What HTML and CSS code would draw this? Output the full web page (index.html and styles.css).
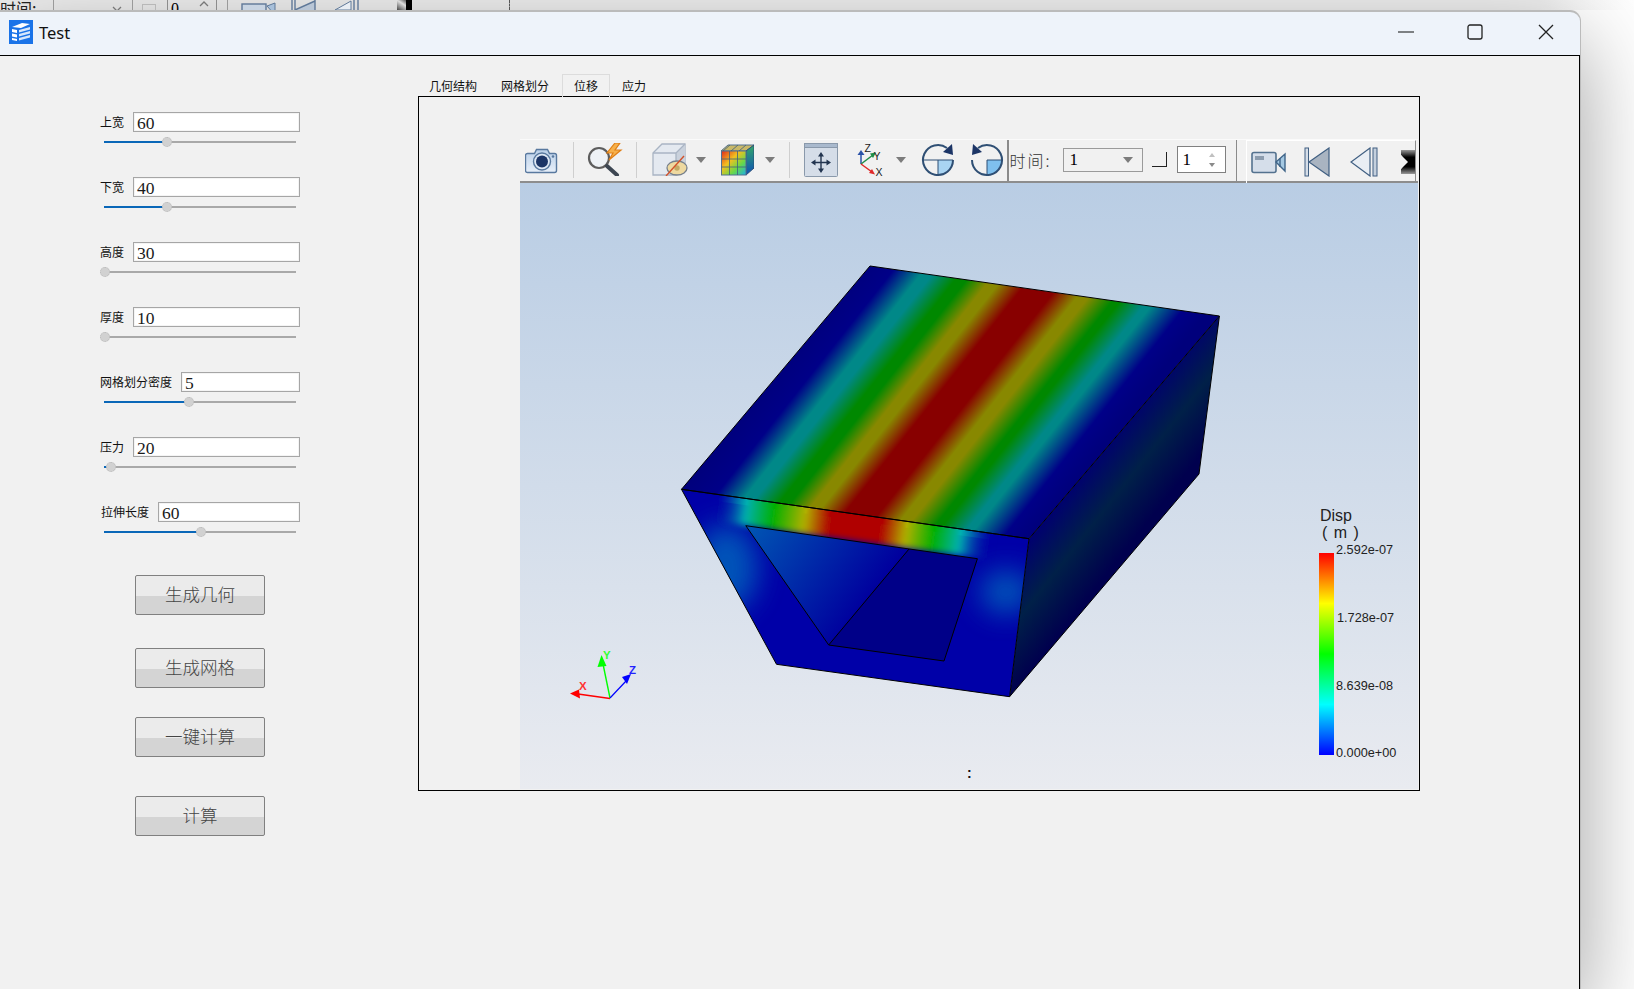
FILE: index.html
```html
<!DOCTYPE html>
<html lang="zh">
<head>
<meta charset="utf-8">
<title>Test</title>
<link rel="stylesheet" href="styles.css">
</head>
<body>
<div class="backdrop">
  <span class="bd-time">时间:</span>
  <span class="bd-combo"><svg class="bd-chev" width="10" height="6" viewBox="0 0 10 6"><path d="M1 1l4 4 4-4" fill="none" stroke="#777" stroke-width="1.3"/></svg></span>
  <span class="bd-check"></span>
  <span class="bd-spin">0<svg class="bd-up" width="10" height="6" viewBox="0 0 10 6"><path d="M1 5l4-4 4 4" fill="none" stroke="#777" stroke-width="1.3"/></svg></span>
  <span class="bd-sep"></span>
  <svg class="bd-ic1" width="36" height="10" viewBox="0 0 36 10"><rect x="1" y="4" width="24" height="12" fill="#c8d4e2" stroke="#5f7898" stroke-width="1.4"/><path d="M26 6l8-3v12z" fill="#a8c0da" stroke="#5f7898"/></svg>
  <svg class="bd-ic2" width="26" height="10" viewBox="0 0 26 10"><path d="M24 1v9H4z" fill="#b9c6d6"/><path d="M1 0v10M4 0v10M24 1L4 10M24 0v10" fill="none" stroke="#5f7898" stroke-width="1.4"/></svg>
  <svg class="bd-ic3" width="26" height="10" viewBox="0 0 26 10"><path d="M17 1L1 10h16z" fill="#e8edf3" stroke="#5f7898"/><path d="M20 0v10M24 0v10" stroke="#5f7898" stroke-width="1.4"/></svg>
  <svg class="bd-black" width="15" height="10" viewBox="0 0 15 10"><defs><linearGradient id="bdBlack" x1="0" y1="1" x2="1" y2="0"><stop offset="0" stop-color="#444"/><stop offset=".5" stop-color="#ddd"/><stop offset="1" stop-color="#000"/></linearGradient></defs><rect width="15" height="10" fill="url(#bdBlack)"/><path d="M9 0h6v10H9z" fill="#000"/></svg>
  <span class="bd-dash"></span>
</div>

<div class="window">
  <header class="titlebar">
    <svg class="app-icon" width="24" height="24" viewBox="0 0 24 24">
      <rect width="24" height="24" fill="#1a73e8"/>
      <path d="M3 7l10-4 8 1-9 4zM3 9l5 1v3l-5-1zM3 13.500l5 1v3l-5-1zM3 18l5 1v2l-5-1z" fill="#fff"/>
      <path d="M10 10l11-3v2.500l-11 3zM10 14l11-3v2.500l-11 3zM10 18l11-3v2.500l-11 3z" fill="#d7e7fb"/>
    </svg>
    <span class="app-title">Test</span>
    <svg class="win-min" width="16" height="2" viewBox="0 0 16 2"><path d="M0 1h16" stroke="#222" stroke-width="1.100"/></svg>
    <svg class="win-max" width="16" height="16" viewBox="0 0 16 16"><rect x="1" y="1" width="14" height="14" rx="2" fill="none" stroke="#222" stroke-width="1.300"/></svg>
    <svg class="win-close" width="16" height="16" viewBox="0 0 16 16"><path d="M1 1l14 14M15 1L1 15" stroke="#222" stroke-width="1.300"/></svg>
  </header>

  <div class="client">
    <aside class="form">
      <div class="field"><div class="field-top"><span class="field-label">上宽</span><div class="field-input">60</div></div><div class="slider"><div class="slider-fill" style="width:63px"><i class="slider-thumb"></i></div></div></div>
      <div class="field"><div class="field-top"><span class="field-label">下宽</span><div class="field-input">40</div></div><div class="slider"><div class="slider-fill" style="width:63px"><i class="slider-thumb"></i></div></div></div>
      <div class="field"><div class="field-top"><span class="field-label">高度</span><div class="field-input">30</div></div><div class="slider"><div class="slider-fill" style="width:1px"><i class="slider-thumb"></i></div></div></div>
      <div class="field"><div class="field-top"><span class="field-label">厚度</span><div class="field-input">10</div></div><div class="slider"><div class="slider-fill" style="width:1px"><i class="slider-thumb"></i></div></div></div>
      <div class="field"><div class="field-top"><span class="field-label">网格划分密度</span><div class="field-input">5</div></div><div class="slider"><div class="slider-fill" style="width:85px"><i class="slider-thumb"></i></div></div></div>
      <div class="field"><div class="field-top"><span class="field-label">压力</span><div class="field-input">20</div></div><div class="slider"><div class="slider-fill" style="width:7px"><i class="slider-thumb"></i></div></div></div>
      <div class="field"><div class="field-top field-top-shift"><span class="field-label">拉伸长度</span><div class="field-input">60</div></div><div class="slider"><div class="slider-fill" style="width:97px"><i class="slider-thumb"></i></div></div></div>
      <div class="action action-1">生成几何</div>
      <div class="action action-2">生成网格</div>
      <div class="action action-3">一键计算</div>
      <div class="action action-4">计算</div>
    </aside>

    <main class="workspace">
      <nav class="tabs">
        <span class="tab">几何结构</span>
        <span class="tab">网格划分</span>
        <span class="tab tab-active">位移</span>
        <span class="tab">应力</span>
      </nav>
      <section class="viewer">
        <div class="toolbar">
          <svg class="ic ic-camera" width="34" height="28" viewBox="0 0 34 28">
            <defs><linearGradient id="camBody" x1="0" y1="0" x2="0" y2="1"><stop offset="0" stop-color="#b9cfe8"/><stop offset="1" stop-color="#e7eff9"/></linearGradient></defs>
            <path d="M2.500 7.500h7l2-4h11l2 4h5a2 2 0 0 1 2 2v15a2 2 0 0 1-2 2h-27a2 2 0 0 1-2-2v-15a2 2 0 0 1 2-2z" fill="url(#camBody)" stroke="#59799f" stroke-width="1.400"/>
            <circle cx="17" cy="15.500" r="8.500" fill="#dfe9f5" stroke="#59799f" stroke-width="1.400"/>
            <circle cx="17" cy="15.500" r="6" fill="#1c3566"/>
            <circle cx="28" cy="10.500" r="1.300" fill="#59799f"/>
          </svg>
          <span class="sep sep-1"></span>
          <svg class="ic ic-search" width="36" height="33" viewBox="0 0 36 33">
            <circle cx="12" cy="15" r="10" fill="#eef2f6" stroke="#5d5d5d" stroke-width="2.200"/>
            <path d="M20 23l10 9" stroke="#3d4652" stroke-width="4" stroke-linecap="round"/>
            <path d="M28 0l-8 10h6l-4 7 12-10h-6l5-7z" fill="#f6b04a" stroke="#e07f16" stroke-width="1.200"/>
          </svg>
          <span class="sep sep-2"></span>
          <svg class="ic ic-cube" width="36" height="33" viewBox="0 0 36 33">
            <path d="M1 10L10 1h23v22l-9 9H1z" fill="#e4e9f0" stroke="#a9b4c3" stroke-width="1.300"/>
            <path d="M24 10l9-9v22l-9 9z" fill="#c9d1dc"/>
            <path d="M1 10h23v22M24 10l9-9" fill="none" stroke="#a9b4c3" stroke-width="1.300"/>
            <ellipse cx="25" cy="25" rx="10" ry="7" fill="#eed9a0" stroke="#77808c" stroke-width="1.300"/>
            <circle cx="25" cy="25" r="2.700" fill="#c3a965"/>
            <path d="M14 33L32 13" stroke="#d2522a" stroke-width="1.400"/>
          </svg>
          <svg class="chev chev-cube" width="10" height="6" viewBox="0 0 10 6"><path d="M0 0h10L5 6z" fill="#7c7c7c"/></svg>
          <svg class="ic ic-colors" width="33" height="32" viewBox="0 0 33 32">
            <defs>
              <linearGradient id="rainbow" x1="0" y1="0" x2="1" y2="1"><stop offset="0" stop-color="#e0281c"/><stop offset=".38" stop-color="#f2c020"/><stop offset=".68" stop-color="#68d848"/><stop offset="1" stop-color="#18b0e8"/></linearGradient>
              <linearGradient id="rainbowSide" x1="0" y1="0" x2="0" y2="1"><stop offset="0" stop-color="#34a868"/><stop offset="1" stop-color="#0c50b8"/></linearGradient>
            </defs>
            <path d="M0 7L7 1h26L25 7z" fill="#c8b868" stroke="#52708f"/>
            <path d="M25 7l8-6v23l-8 7z" fill="url(#rainbowSide)" stroke="#2c4f78"/>
            <rect x="0.500" y="7" width="24.500" height="24" fill="url(#rainbow)" stroke="#52708f"/>
            <path d="M8.500 7v24M16.500 7v24M.5 15h24.500M.5 23h24.500M9 1L2 7M17 1l-7 6M25 1l-7 6" stroke="#3f5f7f" stroke-width=".8" fill="none"/>
          </svg>
          <svg class="chev chev-colors" width="10" height="6" viewBox="0 0 10 6"><path d="M0 0h10L5 6z" fill="#7c7c7c"/></svg>
          <span class="sep sep-3"></span>
          <svg class="ic ic-fit" width="34" height="34" viewBox="0 0 34 34">
            <rect x="0.500" y="0.500" width="33" height="33" rx="1" fill="#d5dde8" stroke="#8a99ab"/>
            <rect x="0.500" y="0.500" width="33" height="4" fill="#a9b9cd" stroke="#8a99ab"/>
            <path d="M17 12v15M9 19.500h16" stroke="#22344f" stroke-width="1.400"/>
            <path d="M17 9l-3 4.500h6zM17 30l-3-4.500h6zM7 19.500l4.500-3v6zM27 19.500l-4.500-3v6z" fill="#22344f"/>
          </svg>
          <svg class="ic ic-axes" width="28" height="34" viewBox="0 0 28 34">
            <path d="M4 21V10" stroke="#2a52a8" stroke-width="1.500"/><path d="M4 7l-3.500 5h7z" fill="#2a52a8"/>
            <path d="M4 21l12-9" stroke="#1e8c48" stroke-width="1.500"/><path d="M19 9.500l-6 1 3 4.500z" fill="#1e8c48"/>
            <path d="M4 21l11 8" stroke="#e02828" stroke-width="1.500"/><path d="M18 31.500l-6-1.500 3-4z" fill="#e02828"/>
            <text class="axis-letter" x="7.500" y="9">Z</text>
            <text class="axis-letter" x="16.500" y="17">Y</text>
            <text class="axis-letter" x="18.500" y="33">X</text>
          </svg>
          <svg class="chev chev-axes" width="10" height="6" viewBox="0 0 10 6"><path d="M0 0h10L5 6z" fill="#7c7c7c"/></svg>
          <svg class="ic ic-rot1" width="34" height="34" viewBox="0 0 34 34">
            <path d="M17 17h15a15 15 0 0 1-15 15z" fill="#a9d4f2"/>
            <path d="M2 17h30M17 17v15" stroke="#2f4f74" stroke-width="1"/>
            <path d="M26 5A15 15 0 1 0 32 17" fill="none" stroke="#2f4f74" stroke-width="2"/>
            <path d="M31 1l1 11-10-3z" fill="#1c3566"/>
          </svg>
          <svg class="ic ic-rot2" width="34" height="34" viewBox="0 0 34 34">
            <path d="M17 17h15a15 15 0 0 1-15 15z" fill="#7fc0ee"/>
            <path d="M17 17h15M17 17v15" stroke="#2f4f74" stroke-width="1"/>
            <path d="M8 5A15 15 0 1 1 2 17" fill="none" stroke="#2f4f74" stroke-width="2"/>
            <path d="M3 1l-1 11 10-3z" fill="#1c3566"/>
          </svg>
          <span class="sep-dark sep-4"></span>
          <span class="time-label">时间:</span>
          <div class="combo"><span class="combo-value">1</span><svg width="10" height="6" viewBox="0 0 10 6"><path d="M0 0h10L5 6z" fill="#7c7c7c"/></svg></div>
          <span class="mini-btn"></span>
          <div class="spin"><span class="spin-value">1</span><svg width="8" height="16" viewBox="0 0 8 16"><path d="M4 1L7 5H1z" fill="#c0c0c0"/><path d="M4 15L7 11H1z" fill="#8a8a8a"/></svg></div>
          <span class="sep-dark sep-5"></span>
          <div class="toolbar-end">
            <svg class="ic ic-rec" width="36" height="24" viewBox="0 0 36 24">
              <rect x="1" y="2.500" width="24" height="20" rx="2" fill="#d5deea" stroke="#54728f" stroke-width="1.600"/>
              <rect x="4" y="6" width="9" height="4" fill="#8c9cae"/>
              <path d="M25 12l9-8v17z" fill="#a4c8e2" stroke="#3f6488" stroke-width="1.400"/>
              <path d="M29 8v9" stroke="#3f6488" stroke-width="1.400"/>
            </svg>
            <svg class="ic ic-first" width="26" height="30" viewBox="0 0 26 30">
              <rect x="1" y="1" width="3.500" height="28" fill="#d6dee8" stroke="#405f82"/>
              <path d="M25 1v28L5 15z" fill="#a9b4c1" stroke="#405f82" stroke-width="1.200"/>
            </svg>
            <svg class="ic ic-prev" width="29" height="30" viewBox="0 0 29 30">
              <path d="M20 1v28L1 15z" fill="#e9eef4" stroke="#405f82" stroke-width="1.200"/>
              <rect x="23" y="1" width="4" height="28" fill="#c5d0dd" stroke="#405f82"/>
            </svg>
            <svg class="ic ic-next" width="14" height="24" viewBox="0 0 14 24">
              <defs><linearGradient id="nextFade" x1="0" y1="0" x2="0" y2="1"><stop offset="0" stop-color="#999"/><stop offset=".3" stop-color="#000"/><stop offset=".7" stop-color="#000"/><stop offset="1" stop-color="#999"/></linearGradient></defs>
              <path d="M0 0h14v24H0l0-5 5-7-5-7z" fill="url(#nextFade)"/>
              <path d="M0 5l7 7-7 7z" fill="#f1f1f1"/>
            </svg>
          </div>
        </div>
        <svg class="scene" viewBox="520 183 898 606" width="898" height="606">
          <defs>
            <linearGradient id="sky" x1="0" y1="0" x2="0" y2="1"><stop offset="0" stop-color="#b9cde4"/><stop offset="1" stop-color="#e9ebf0"/></linearGradient>
            <linearGradient id="topFace" gradientUnits="userSpaceOnUse" x1="681.5" y1="489.3" x2="919.7" y2="677.4">
              <stop offset="0" stop-color="#00007c"/><stop offset=".1" stop-color="#000088"/><stop offset=".18" stop-color="#008888"/><stop offset=".21" stop-color="#008888"/><stop offset=".28" stop-color="#008800"/><stop offset=".31" stop-color="#008800"/><stop offset=".37" stop-color="#888800"/><stop offset=".4" stop-color="#888800"/><stop offset=".47" stop-color="#880000"/><stop offset=".56" stop-color="#880000"/><stop offset=".63" stop-color="#888800"/><stop offset=".66" stop-color="#888800"/><stop offset=".73" stop-color="#008800"/><stop offset=".75" stop-color="#008800"/><stop offset=".82" stop-color="#008888"/><stop offset=".84" stop-color="#008888"/><stop offset=".93" stop-color="#000088"/><stop offset="1" stop-color="#00007c"/>
            </linearGradient>
            <linearGradient id="rightFace" gradientUnits="userSpaceOnUse" x1="1029" y1="538.7" x2="1094" y2="590">
              <stop offset="0" stop-color="#000070"/><stop offset=".5" stop-color="#002048"/><stop offset="1" stop-color="#00004e"/>
            </linearGradient>
            <linearGradient id="frontBand" gradientUnits="userSpaceOnUse" x1="681.5" y1="489.3" x2="1029" y2="538.7">
              <stop offset=".1" stop-color="#0000a8" stop-opacity="0"/><stop offset=".19" stop-color="#00b0b0"/><stop offset=".27" stop-color="#00b000"/><stop offset=".36" stop-color="#b0b000"/><stop offset=".43" stop-color="#b00000"/><stop offset=".58" stop-color="#b00000"/><stop offset=".65" stop-color="#b0b000"/><stop offset=".73" stop-color="#00b000"/><stop offset=".805" stop-color="#00b0b0"/><stop offset=".9" stop-color="#0000a8" stop-opacity="0"/>
            </linearGradient>
            <linearGradient id="holeLeft" gradientUnits="userSpaceOnUse" x1="745" y1="525" x2="860" y2="610">
              <stop offset="0" stop-color="#0058b4"/><stop offset="1" stop-color="#00009e"/>
            </linearGradient>
            <linearGradient id="legendBar" x1="0" y1="0" x2="0" y2="1">
              <stop offset="0" stop-color="#f00"/><stop offset=".25" stop-color="#ff0"/><stop offset=".5" stop-color="#0f0"/><stop offset=".75" stop-color="#0ff"/><stop offset="1" stop-color="#00f"/>
            </linearGradient>
            <clipPath id="frontClip"><polygon points="681.5,489.3 1029,538.7 1009.600,696.700 776.500,664.300"/></clipPath>
            <filter id="soft" x="-60%" y="-60%" width="220%" height="220%"><feGaussianBlur stdDeviation="14"/></filter>
            <filter id="softSmall" x="-10%" y="-50%" width="120%" height="200%"><feGaussianBlur stdDeviation="3"/></filter>
          </defs>
          <rect x="520" y="183" width="898" height="606" fill="url(#sky)"/>

          <polygon points="870,266 1219.400,316 1029,538.700 681.500,489.300" fill="url(#topFace)"/>
          <polygon points="1029,538.700 1219.400,316 1199,474 1009.600,696.700" fill="url(#rightFace)"/>
          <polygon points="681.5,489.3 1029,538.700 1009.600,696.700 776.500,664.300" fill="#0000a8"/>
          <g clip-path="url(#frontClip)">
            <ellipse class="front-glow" cx="726" cy="568" rx="32" ry="44"/>
            <ellipse class="front-glow" cx="1006" cy="592" rx="26" ry="22"/>
            <polygon points="690,487 1005,532 1000,561 690,518" fill="url(#frontBand)" filter="url(#softSmall)"/>
            <polygon points="681.5,489.3 1029,538.700 1029,545 681.5,496" fill="url(#frontBand)"/>
          </g>
          <polygon points="745.800,525.700 909,549 828.700,645" fill="url(#holeLeft)"/>
          <polygon points="909,549 977.400,558.700 944,661 828.700,645" fill="#000088"/>
          <g class="edges">
            <polygon points="870,266 1219.400,316 1029,538.700 681.500,489.300"/>
            <polygon points="681.5,489.3 1029,538.700 1009.600,696.700 776.500,664.300"/>
            <polyline points="1219.400,316 1199,474 1009.600,696.700"/>
            <polygon points="745.800,525.700 977.400,558.700 944,661 828.700,645"/>
            <line x1="909" y1="549" x2="828.700" y2="645"/>
          </g>

          <g class="triad">
            <path d="M610 698.500L578 694" stroke="#f00" stroke-width="1.400"/>
            <path d="M570 693.500l9-4 1 9z" fill="#f00"/>
            <path d="M610 698L603 664" stroke="#0f0" stroke-width="1.400"/>
            <path d="M601.500 655l-4 12 9-1z" fill="#0f0"/>
            <path d="M610 698L627 680" stroke="#00f" stroke-width="1.200"/>
            <path d="M631 674l-9 3 5 7z" fill="#00f"/>
            <text class="triad-x" x="579" y="690">X</text>
            <text class="triad-y" x="603" y="659">Y</text>
            <text class="triad-z" x="629" y="674">Z</text>
          </g>

          <rect x="1319" y="553" width="15" height="202" fill="url(#legendBar)"/>
          <text class="legend-title" x="1320" y="521">Disp</text>
          <text class="legend-title legend-unit" x="1322" y="538">( m )</text>
          <text class="legend-num" x="1336" y="554">2.592e-07</text>
          <text class="legend-num" x="1337" y="622">1.728e-07</text>
          <text class="legend-num" x="1336" y="690">8.639e-08</text>
          <text class="legend-num" x="1336" y="757">0.000e+00</text>
          <text class="scene-dot" x="967" y="778">:</text>
        </svg>
      </section>
    </main>
  </div>
</div>
</body>
</html>
```

FILE: styles.css
```css
* { box-sizing: border-box; }
html, body { margin: 0; padding: 0; }
body {
  width: 1634px;
  height: 989px;
  overflow: hidden;
  background: #fff;
  font-family: "Noto Sans CJK SC", "Liberation Sans", sans-serif;
  color: #000;
}

/* the window that lies behind */
.backdrop {
  height: 10px;
  width: 1634px;
  display: flex;
  overflow: hidden;
  background: linear-gradient(90deg, #f0f0f0 0, #f0f0f0 1540px, #fff 1634px);
}
.bd-time { width: 53px; font-size: 16px; line-height: 16px; color: #222; flex: none; white-space: nowrap; }
.bd-combo { width: 80px; height: 10px; border-left: 1px solid #9a9a9a; border-right: 1px solid #9a9a9a; display: flex; justify-content: flex-end; align-items: flex-end; padding-right: 10px; flex: none; }
.bd-chev { margin-bottom: -2px; }
.bd-check { width: 14px; height: 10px; margin: 4px 0 0 9px; border: 1px solid #b8b8b8; flex: none; }
.bd-spin { width: 50px; height: 10px; margin-left: 11px; border-left: 1px solid #8c8c8c; border-right: 1px solid #8c8c8c; font: 16px/18px "Liberation Serif", serif; padding-left: 3px; display: flex; flex: none; }
.bd-up { margin: 1px 0 0 20px; }
.bd-sep { width: 1px; height: 10px; margin-left: 10px; background: #9a9a9a; flex: none; }
.bd-ic1 { margin-left: 13px; flex: none; }
.bd-ic2 { margin-left: 14px; flex: none; }
.bd-ic3 { margin-left: 17px; flex: none; }
.bd-black { margin-left: 37px; flex: none; }
.bd-dash { width: 0; height: 10px; margin-left: 97px; border-left: 1px dashed #555; flex: none; }

/* main window */
.window {
  width: 1581px;
  height: 979px;
  background: #eef3fa;
  border-top: 2px solid #bbb;
  border-right: 1.500px solid #bbb;
  border-radius: 0 11px 0 0;
  box-shadow: 0 30px 90px rgba(0, 0, 0, .38);
  display: flex;
  flex-direction: column;
}
.titlebar {
  height: 44px;
  flex: none;
  display: flex;
  align-items: center;
  border-bottom: 1px solid #000;
  padding: 0 0 3px 9px;
}
.app-icon { flex: none; }
.app-title { margin-left: 6px; font: 16.500px "Noto Sans", sans-serif; color: #111; }
.win-min { margin-left: auto; flex: none; }
.win-max { margin-left: 53px; flex: none; }
.win-close { margin-left: 55px; margin-right: 26px; flex: none; }

.client {
  flex: 1;
  min-height: 0;
  display: flex;
  background: #f1f1f1;
  border-right: 1px solid #000;
}

/* left form */
.form {
  width: 418px;
  flex: none;
  padding: 56px 0 0 100px;
}
.field { height: 65px; width: 200px; }
.field-top { display: flex; align-items: center; height: 20px; gap: 9px; }
.field-top-shift { padding-left: 1px; }
.field-label { font-size: 12px; line-height: 20px; white-space: nowrap; color: #111; flex: none; }
.field-input {
  flex: 1;
  height: 20px;
  background: #fff;
  border: 1px solid #a6a6a6;
  box-shadow: inset 0 0 0 1px #f4f4f4;
  font: 17.500px/20px "Liberation Serif", serif;
  padding-left: 3px;
  color: #1a1a1a;
}
.slider {
  margin: 9px 0 0 4px;
  width: 192px;
  height: 2px;
  background: #a9a9a9;
}
.slider-fill { height: 2px; background: #0a67b8; position: relative; }
.slider-thumb {
  position: absolute;
  right: -5px;
  top: -4px;
  width: 10px;
  height: 10px;
  border-radius: 50%;
  background: #d1d1d1;
  border: 1px dotted #b9b9b9;
}
.action {
  width: 130px;
  height: 40px;
  margin-left: 35px;
  border: 1px solid #808080;
  border-radius: 2px;
  background: linear-gradient(#ebebeb 0, #ebebeb 52%, #d4d4d4 52%, #d4d4d4 100%);
  font-size: 17.500px;
  font-weight: 300;
  line-height: 35px;
  text-align: center;
  color: #444;
}
.action-1 { margin-top: 8px; }
.action-2 { margin-top: 33px; }
.action-3 { margin-top: 29px; }
.action-4 { margin-top: 39px; }

/* right side */
.workspace { flex: 1; min-width: 0; padding-top: 18px; }
.tabs { display: flex; gap: 2px; height: 23px; }
.tab {
  padding: 0 11px;
  font-size: 12px;
  line-height: 24px;
  height: 22px;
  color: #111;
  white-space: nowrap;
}
.tab-active {
  border: 1px solid #dcdcdc;
  border-bottom: 0;
  margin: 0 -1px -1px 0;
  height: 23px;
  line-height: 22px;
  position: relative;
}
.viewer {
  width: 1002px;
  height: 695px;
  margin-top: -1px;
  border: 1px solid #000;
  padding: 42px 0 0 101px;
  background: #f1f1f1;
}

.toolbar {
  height: 44px;
  width: 898px;
  display: flex;
  align-items: center;
  background: #f1f1f1;
  border-top: 1px solid #fafafa;
  border-bottom: 2px solid #8d8d8d;
  padding-bottom: 2px;
}
.ic { flex: none; display: block; }
.sep { width: 1px; height: 36px; background: #cfcfcf; flex: none; }
.sep-dark { width: 1.500px; height: 41px; background: #8a8a8a; flex: none; align-self: flex-start; }
.chev { flex: none; }
.ic-camera { margin-left: 5px; }
.sep-1 { margin-left: 14px; }
.ic-search { margin-left: 13px; }
.sep-2 { margin-left: 13px; }
.ic-cube { margin-left: 15px; }
.chev-cube { margin-left: 8px; }
.ic-colors { margin-left: 15px; }
.chev-colors { margin-left: 11px; }
.sep-3 { margin-left: 14px; }
.ic-fit { margin-left: 14px; }
.ic-axes { margin-left: 19px; }
.chev-axes { margin-left: 11px; }
.ic-rot1 { margin-left: 15px; }
.ic-rot2 { margin-left: 15px; }
.sep-4 { margin-left: 3px; }
.axis-letter { font: 10.500px "Liberation Sans", sans-serif; fill: #222; }
.time-label { margin-left: 1px; font-size: 16px; letter-spacing: 2px; width: 53px; color: #333; font-weight: 300; white-space: nowrap; flex: none; }
.combo {
  width: 80px;
  height: 24px;
  border: 1px solid #9a9a9a;
  display: flex;
  align-items: center;
  justify-content: space-between;
  padding: 0 9px 0 6px;
  flex: none;
}
.combo-value, .spin-value { font: 17px "Liberation Serif", serif; }
.mini-btn {
  width: 15px;
  height: 15px;
  margin-left: 9px;
  border-right: 1.500px solid #222;
  border-bottom: 1.500px solid #222;
  flex: none;
}
.spin {
  width: 49px;
  height: 27px;
  margin-left: 10px;
  background: #fff;
  border: 1px solid #808080;
  display: flex;
  align-items: center;
  justify-content: space-between;
  padding: 0 9px 0 5px;
  flex: none;
}
.sep-5 { margin-left: 10px; }
.toolbar-end {
  margin-left: 9px;
  width: 170px;
  height: 43px;
  align-self: flex-start;
  display: flex;
  align-items: center;
  border-top: 1px solid #fff;
  border-left: 1px solid #fff;
  border-right: 1px solid #8d8d8d;
  overflow: hidden;
}
.ic-rec { margin-left: 4px; }
.ic-first { margin-left: 17px; }
.ic-prev { margin-left: 20px; }
.ic-next { margin-left: 22px; }

.scene { display: block; }
.front-glow { fill: #0064bc; opacity: .85; filter: url(#soft); }
.edges polygon, .edges polyline, .edges line { fill: none; stroke: #000; stroke-width: 1; }
.triad-x, .triad-y, .triad-z { font: bold 11.500px "Liberation Sans", sans-serif; }
.triad-x { fill: #f33; }
.triad-y { fill: #3f3; }
.triad-z { fill: #22f; }
.legend-title { font: 16px "Liberation Sans", sans-serif; fill: #222; }
.legend-unit { letter-spacing: 1px; }
.legend-num { font: 12.700px "Liberation Sans", sans-serif; fill: #222; }
.scene-dot { font: bold 14px "Liberation Sans", sans-serif; fill: #111; }
```
